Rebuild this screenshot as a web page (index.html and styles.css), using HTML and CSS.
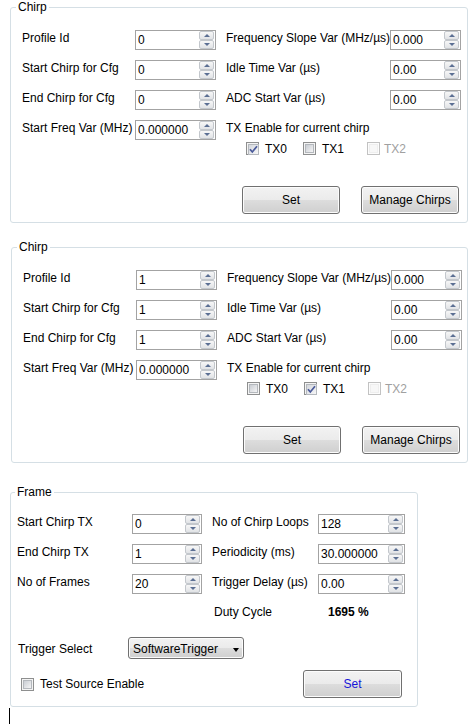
FILE: index.html
```html
<!DOCTYPE html>
<html>
<head>
<meta charset="utf-8">
<title>Chirp / Frame</title>
<link rel="stylesheet" href="styles.css">
</head>
<body>
<fieldset class="grp g1">
  <legend>Chirp</legend>
  <div class="body">
    <div class="grid">
      <span class="lbl">Profile Id</span>
      <div class="num"><span class="val">0</span><span class="spin"><i class="up"></i><i class="dn"></i></span></div>
      <span class="lbl r">Frequency Slope Var (MHz/µs)</span>
      <div class="num"><span class="val">0.000</span><span class="spin"><i class="up"></i><i class="dn"></i></span></div>

      <span class="lbl">Start Chirp for Cfg</span>
      <div class="num"><span class="val">0</span><span class="spin"><i class="up"></i><i class="dn"></i></span></div>
      <span class="lbl r">Idle Time Var (µs)</span>
      <div class="num"><span class="val">0.00</span><span class="spin"><i class="up"></i><i class="dn"></i></span></div>

      <span class="lbl">End Chirp for Cfg</span>
      <div class="num"><span class="val">0</span><span class="spin"><i class="up"></i><i class="dn"></i></span></div>
      <span class="lbl r">ADC Start Var (µs)</span>
      <div class="num"><span class="val">0.00</span><span class="spin"><i class="up"></i><i class="dn"></i></span></div>

      <span class="lbl">Start Freq Var (MHz)</span>
      <div class="num"><span class="val">0.000000</span><span class="spin"><i class="up"></i><i class="dn"></i></span></div>
      <span class="lbl r span2">TX Enable for current chirp</span>
    </div>
    <div class="txrow">
      <label class="chk w1"><span class="cb on"><svg viewBox="0 0 11 11" width="11" height="11"><path d="M2 5.2 L4.3 8 L9 2.2" fill="none" stroke="#4a5a9a" stroke-width="1.7"/></svg></span><span>TX0</span></label>
      <label class="chk w2"><span class="cb"></span><span>TX1</span></label>
      <label class="chk dis"><span class="cb"></span><span>TX2</span></label>
    </div>
    <div class="btns">
      <button class="btn">Set</button>
      <button class="btn">Manage Chirps</button>
    </div>
  </div>
</fieldset>

<fieldset class="grp g2">
  <legend>Chirp</legend>
  <div class="body">
    <div class="grid">
      <span class="lbl">Profile Id</span>
      <div class="num"><span class="val">1</span><span class="spin"><i class="up"></i><i class="dn"></i></span></div>
      <span class="lbl r">Frequency Slope Var (MHz/µs)</span>
      <div class="num"><span class="val">0.000</span><span class="spin"><i class="up"></i><i class="dn"></i></span></div>

      <span class="lbl">Start Chirp for Cfg</span>
      <div class="num"><span class="val">1</span><span class="spin"><i class="up"></i><i class="dn"></i></span></div>
      <span class="lbl r">Idle Time Var (µs)</span>
      <div class="num"><span class="val">0.00</span><span class="spin"><i class="up"></i><i class="dn"></i></span></div>

      <span class="lbl">End Chirp for Cfg</span>
      <div class="num"><span class="val">1</span><span class="spin"><i class="up"></i><i class="dn"></i></span></div>
      <span class="lbl r">ADC Start Var (µs)</span>
      <div class="num"><span class="val">0.00</span><span class="spin"><i class="up"></i><i class="dn"></i></span></div>

      <span class="lbl">Start Freq Var (MHz)</span>
      <div class="num"><span class="val">0.000000</span><span class="spin"><i class="up"></i><i class="dn"></i></span></div>
      <span class="lbl r span2">TX Enable for current chirp</span>
    </div>
    <div class="txrow">
      <label class="chk w1"><span class="cb"></span><span>TX0</span></label>
      <label class="chk w2"><span class="cb on"><svg viewBox="0 0 11 11" width="11" height="11"><path d="M2 5.2 L4.3 8 L9 2.2" fill="none" stroke="#4a5a9a" stroke-width="1.7"/></svg></span><span>TX1</span></label>
      <label class="chk dis"><span class="cb"></span><span>TX2</span></label>
    </div>
    <div class="btns">
      <button class="btn">Set</button>
      <button class="btn">Manage Chirps</button>
    </div>
  </div>
</fieldset>

<fieldset class="grp g3">
  <legend>Frame</legend>
  <div class="body">
    <div class="grid">
      <span class="lbl">Start Chirp TX</span>
      <div class="num"><span class="val">0</span><span class="spin"><i class="up"></i><i class="dn"></i></span></div>
      <span class="lbl r">No of Chirp Loops</span>
      <div class="num"><span class="val">128</span><span class="spin"><i class="up"></i><i class="dn"></i></span></div>

      <span class="lbl">End Chirp TX</span>
      <div class="num"><span class="val">1</span><span class="spin"><i class="up"></i><i class="dn"></i></span></div>
      <span class="lbl r">Periodicity (ms)</span>
      <div class="num"><span class="val">30.000000</span><span class="spin"><i class="up"></i><i class="dn"></i></span></div>

      <span class="lbl">No of Frames</span>
      <div class="num"><span class="val">20</span><span class="spin"><i class="up"></i><i class="dn"></i></span></div>
      <span class="lbl r">Trigger Delay (µs)</span>
      <div class="num"><span class="val">0.00</span><span class="spin"><i class="up"></i><i class="dn"></i></span></div>

      <span class="lbl duty">Duty Cycle</span>
      <span class="lbl dval">1695 %</span>
    </div>
    <div class="trig">
      <span class="lbl tl">Trigger Select</span>
      <div class="combo"><span>SoftwareTrigger</span><i class="arrow"></i></div>
    </div>
    <div class="foot">
      <label class="chk ts"><span class="cb"></span><span>Test Source Enable</span></label>
      <button class="btn blue">Set</button>
    </div>
  </div>
</fieldset>
<div class="caret"></div>
</body>
</html>
```

FILE: styles.css
```css
* { box-sizing: border-box; }
html, body { margin: 0; padding: 0; background: #fff; }
body {
  font-family: "Liberation Sans", Arial, sans-serif;
  font-size: 12px;
  line-height: 14px;
  color: #000;
  width: 474px;
  height: 724px;
  overflow: hidden;
}

/* group boxes */
.grp {
  margin: 0 0 0 10px;
  padding: 0;
  border: 1px solid #d5dfe5;
  border-radius: 3px;
  min-inline-size: 0;
}
.grp legend {
  padding: 0 2px;
  margin-left: 5px;
  line-height: 15px;
}
.g1 { width: 458px; }
.g2 { width: 457px; margin: 17px 0 0 11px; }
.g3 { width: 408px; margin-top: 22px; }
.g3 legend { margin-left: 4px; }

.body { padding: 15px 6px 8px 11px; }
.g2 .body { padding-right: 5px; }
.g3 .body { padding: 14px 11px 8px 6px; }

.grid {
  display: grid;
  grid-template-columns: 113px 81px 174px 71px;
  grid-auto-rows: 20px;
  row-gap: 10px;
}
.g3 .grid { grid-template-columns: 115px 70px 116px 87px; }

.lbl { padding-top: 1px; white-space: nowrap; }
.lbl.r { padding-left: 10px; }
.span2 { grid-column: 3 / span 2; }
.duty { grid-column: 3; padding-left: 12px; }
.dval { grid-column: 4; padding-left: 10px; font-weight: bold; }

/* numeric up-down */
.num {
  display: flex;
  border: 1px solid #a3a3a3;
  background: #fff;
  padding-left: 2px;
}
.val { flex: 1; padding-top: 2px; white-space: nowrap; overflow: hidden; }
.spin {
  width: 15px;
  margin-right: 1px;
  display: flex;
  flex-direction: column;
}
.spin i {
  flex: 1;
  display: flex;
  align-items: center;
  justify-content: center;
  border: 1px solid #c3c7cc;
  border-radius: 2px;
  background: linear-gradient(#f7f7f7, #e1e3e6);
}
.spin i::after {
  content: "";
  width: 0;
  height: 0;
  border-left: 3px solid transparent;
  border-right: 3px solid transparent;
}
.spin .up::after { border-bottom: 3px solid #5b6f93; }
.spin .dn::after { border-top: 3px solid #5b6f93; }

/* checkboxes */
.txrow {
  display: flex;
  align-items: center;
  height: 13px;
  margin: 2px 0 0 224px;
}
.chk { display: flex; align-items: center; gap: 6px; }
.w1 { width: 57px; }
.w2 { width: 64px; }
.cb {
  width: 13px;
  height: 13px;
  border: 1px solid #8e8f8f;
  background: #f4f4f4;
  padding: 1px;
  display: grid;
}
.cb::before {
  content: "";
  grid-area: 1 / 1;
  border: 1px solid #b4b8bd;
  background: linear-gradient(135deg, #c9cdd3, #f4f4f5);
}
.cb svg { grid-area: 1 / 1; display: block; }
.cb.on::before { background: linear-gradient(135deg, #d4d7dc, #f7f7f8); }
.dis { color: #a0a0a0; gap: 4px; }
.dis .cb { border-color: #c2c2c2; background: #fcfcfc; }
.dis .cb::before { border-color: #eeeeee; background: #f7f7f7; }

/* buttons */
.btns {
  display: flex;
  gap: 21px;
  margin: 31px 0 0 220px;
}
.btn {
  font: inherit;
  color: #000;
  width: 98px;
  height: 28px;
  padding: 0;
  border: 1px solid #707070;
  border-radius: 3px;
  background: linear-gradient(#f2f2f2 0%, #ebebeb 50%, #dddddd 50%, #cfcfcf 100%);
  box-shadow: inset 0 0 0 1px #fcfcfc;
  line-height: 26px;
  text-align: center;
}
.btn.blue { color: #1515d8; width: 99px; margin-left: auto; margin-right: 4px; }

/* frame bottom */
.trig { display: flex; margin-top: 13px; }
.tl { width: 111px; padding: 5px 0 0 1px; }
.combo {
  width: 116px;
  height: 22px;
  display: flex;
  align-items: flex-start;
  border: 1px solid #707070;
  border-radius: 3px;
  background: linear-gradient(#f2f2f2 0%, #ebebeb 50%, #dddddd 50%, #cfcfcf 100%);
  box-shadow: inset 0 0 0 1px #fcfcfc;
  padding: 4px 4px 0 4px;
}
.combo span { flex: 1; }
.arrow {
  width: 0;
  height: 0;
  margin-top: 6px;
  border-left: 3.5px solid transparent;
  border-right: 3.5px solid transparent;
  border-top: 4px solid #000;
}
.foot {
  display: flex;
  align-items: center;
  height: 28px;
  margin-top: 11px;
}
.ts { margin-left: 4px; }

.caret {
  width: 1px;
  height: 16px;
  background: #000;
  margin: 1px 0 0 9px;
}
```
